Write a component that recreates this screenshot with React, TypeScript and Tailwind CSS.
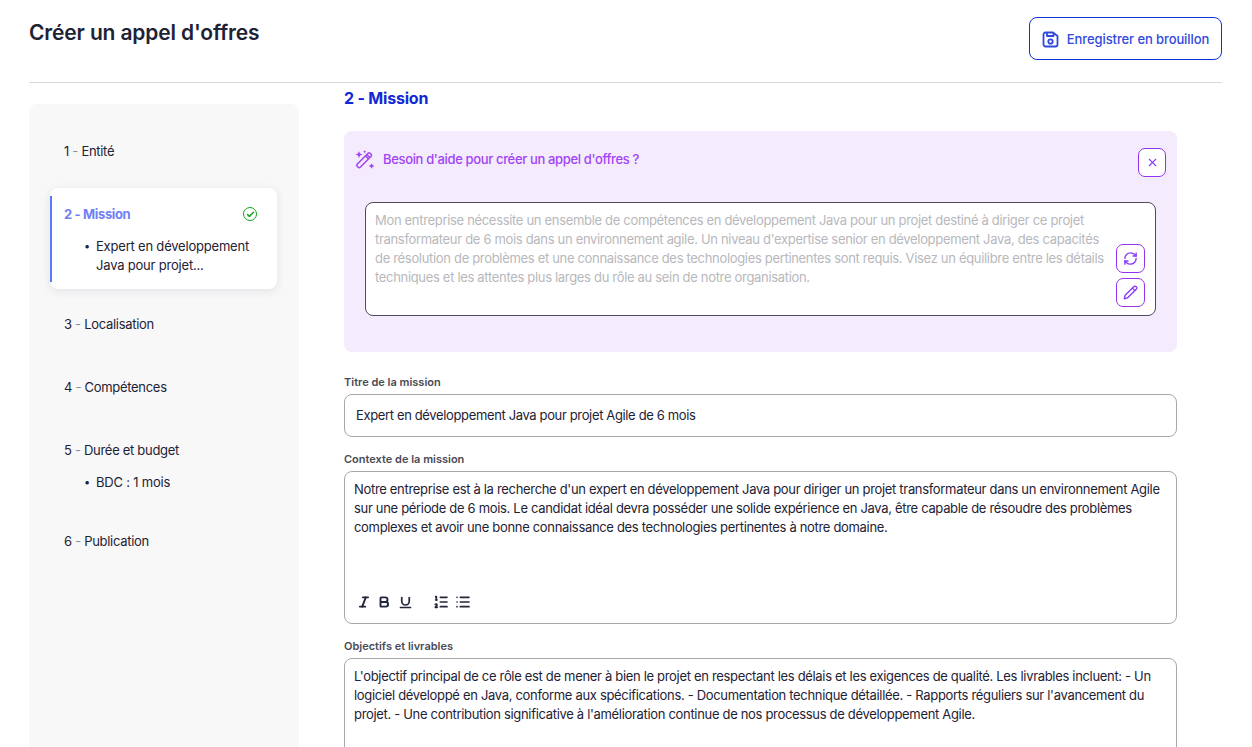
import React from "react";
import { Check, X, RefreshCw, Pencil, Italic, Bold, Underline, ListOrdered, List } from "lucide-react";

const steps = [
  { n: "3", label: "Localisation" },
  { n: "4", label: "Compétences" },
];

function Step({ n, label }: { n: string; label: string }) {
  return (
    <div className="text-[13px] leading-[18px] text-[#1e2235] tracking-[-0.3px]">
      {n} <span className="text-[#8a8d9a]">-</span> {label}
    </div>
  );
}

function SaveIcon() {
  return (
    <svg width="17" height="17" viewBox="0 0 17 17" fill="none" stroke="#2f49dd" strokeWidth="1.8" strokeLinejoin="round">
      <path d="M3.5 1.5h7.5l4.5 3.5v8.5a2 2 0 0 1-2 2h-10a2 2 0 0 1-2-2v-10a2 2 0 0 1 2-2z" />
      <path d="M5 1.5v3.5h6.5v-3" />
      <circle cx="8.5" cy="10.5" r="2.2" />
    </svg>
  );
}

function WandIcon() {
  return (
    <svg width="20" height="20" viewBox="1.5 1 17.5 17.5" className="mt-[2px] shrink-0" fill="none" stroke="#a044f5" strokeWidth="1.3">
      <rect x="-8" y="-1.9" width="16" height="3.8" rx="1.2" transform="translate(9.5 10) rotate(-45)" />
      <path d="M11.8 4.9l2.7 2.7M10.6 6.1l2.7 2.7" />
      <path d="M5 2l.9 2.1L8 5l-2.1.9L5 8l-.9-2.1L2 5l2.1-.9z" fill="#a044f5" stroke="none" />
      <path d="M16 12.5l.8 1.7 1.7.8-1.7.8-.8 1.7-.8-1.7-1.7-.8 1.7-.8z" fill="#a044f5" stroke="none" />
      <path d="M10 1l.4 1.1 1.1.4-1.1.4-.4 1.1-.4-1.1-1.1-.4 1.1-.4z" fill="#a044f5" stroke="none" />
    </svg>
  );
}

function Sidebar() {
  return (
    <aside className="w-[270px] shrink-0 h-[700px] bg-[#f8f8f9] rounded-lg pt-[38px] pl-[21px] pr-[22px]">
      <div className="pl-[14px]">
        <Step n="1" label="Entité" />
      </div>
      <div className="mt-[28px] h-[101px] bg-white rounded-lg shadow-[0_2px_10px_rgba(30,34,53,0.1)] relative pl-[14px] pr-[20px] pt-[17px]">
        <div className="absolute left-0 top-[8px] bottom-[7px] w-[2px] bg-[#5b7bf5]" />
        <div className="flex items-center justify-between">
          <span className="text-[13px] leading-[18px] font-bold text-[#7280f8] tracking-[-0.35px]">2 - Mission</span>
          <span className="w-[14px] h-[14px] rounded-full border-[1.5px] border-[#16a319] flex items-center justify-center">
            <Check className="w-[9px] h-[9px] text-[#16a319]" strokeWidth={4} />
          </span>
        </div>
        <div className="mt-[14px] flex text-[13px] leading-[19px] text-[#1e2235] tracking-[-0.2px]">
          <span className="w-[32px] pl-[20px] shrink-0 text-[11px]">•</span>
          <span>
            Expert en développement
            <br />
            Java pour projet...
          </span>
        </div>
      </div>
      <div className="pl-[14px] pt-[26px] flex flex-col gap-[45px]">
        {steps.map((s) => (
          <Step key={s.n} n={s.n} label={s.label} />
        ))}
        <div>
          <Step n="5" label="Durée et budget" />
          <div className="mt-[14px] flex text-[13px] leading-[18px] text-[#1e2235] tracking-[-0.2px]">
            <span className="w-[32px] pl-[20px] shrink-0 text-[11px]">•</span>
            <span>BDC : 1 mois</span>
          </div>
        </div>
        <div className="-mt-[4px]">
          <Step n="6" label="Publication" />
        </div>
      </div>
    </aside>
  );
}

function PurpleButton({ children }: { children: React.ReactNode }) {
  return (
    <button className="w-[29px] h-[29px] rounded-[7px] border border-[#9333ea] bg-white flex items-center justify-center text-[#8b3df5]">
      {children}
    </button>
  );
}

export default function App() {
  return (
    <div className="h-screen overflow-hidden bg-white px-[29px] pr-[30px] font-['Inter',sans-serif] text-[#1e2235]">
      <header className="h-[83px] border-b border-[#d9d9d9] flex justify-between items-start">
        <h1 className="mt-[19px] text-[21px] leading-[28px] font-semibold tracking-[-0.15px] text-[#1e2235]">Créer un appel d'offres</h1>
        <button className="mt-[17px] w-[193px] h-[43px] pt-[2px] rounded-lg border border-[#1232d8] flex items-center justify-center gap-[8px] text-[13px] tracking-[-0.1px] font-medium text-[#2f49dd]">
          <SaveIcon />
          Enregistrer en brouillon
        </button>
      </header>
      <div className="flex gap-[45px] pt-[21px]">
        <Sidebar />
        <main className="w-[833px] -mt-[17px]">
          <h2 className="text-[16px] leading-[22px] font-bold text-[#1228d6] tracking-[-0.2px]">2 - Mission</h2>

          <section className="mt-[22px] h-[221px] rounded-lg bg-[#f4ebfd] relative pt-[17px] pl-[11px] pr-[11px]">
            <div className="flex items-start justify-between">
              <div className="flex items-start gap-[8px] text-[13px] leading-[20px] font-medium text-[#a044f5] tracking-[-0.35px]">
                <WandIcon />
                <span className="pt-[1px]">Besoin d'aide pour créer un appel d'offres ?</span>
              </div>
              <button className="w-[28px] h-[29px] rounded-[7px] border border-[#9333ea] bg-white flex items-center justify-center text-[#8b3df5]">
                <X className="w-[13px] h-[13px]" />
              </button>
            </div>
            <div className="absolute left-[21px] right-[21px] top-[71px] h-[114px] rounded-lg border border-[#4f4a5c] bg-white pl-[9px] pr-[42px] pt-[8px] text-[13px] leading-[19px] text-[#b8b8bc] tracking-[-0.32px]">
              Mon entreprise nécessite un ensemble de compétences en développement Java pour un projet destiné à diriger ce projet transformateur de 6 mois dans un environnement agile. Un niveau d'expertise senior en développement Java, des capacités de résolution de problèmes et une connaissance des technologies pertinentes sont requis. Visez un équilibre entre les détails techniques et les attentes plus larges du rôle au sein de notre organisation.
              <div className="absolute right-[10px] bottom-[8px] flex flex-col gap-[5px]">
                <PurpleButton>
                  <RefreshCw className="w-[15px] h-[15px]" strokeWidth={2.25} />
                </PurpleButton>
                <PurpleButton>
                  <Pencil className="w-[15px] h-[15px]" strokeWidth={2.25} />
                </PurpleButton>
              </div>
            </div>
          </section>

          <label className="block mt-[22px] text-[11px] leading-[16px] font-semibold text-[#4a4a55]">Titre de la mission</label>
          <div className="mt-[4px] h-[43px] rounded-lg border border-[#a9a9ad] flex items-center px-[11px] text-[13px] tracking-[-0.36px]">
            Expert en développement Java pour projet Agile de 6 mois
          </div>

          <label className="block mt-[14px] text-[11px] leading-[16px] font-semibold text-[#4a4a55]">Contexte de la mission</label>
          <div className="mt-[4px] h-[153px] rounded-lg border border-[#a9a9ad] relative px-[9px] pt-[8px] text-[13px] leading-[19px] tracking-[-0.32px]">
            Notre entreprise est à la recherche d'un expert en développement Java pour diriger un projet transformateur dans un environnement Agile sur une période de 6 mois. Le candidat idéal devra posséder une solide expérience en Java, être capable de résoudre des problèmes complexes et avoir une bonne connaissance des technologies pertinentes à notre domaine.
            <div className="absolute left-[12px] top-[122px] flex items-center text-[#23263a]">
              <Italic className="w-[14px] h-[14px]" strokeWidth={3.25} />
              <Bold className="w-[14px] h-[14px] ml-[6px]" strokeWidth={3.25} />
              <Underline className="w-[15px] h-[15px] ml-[7px]" strokeWidth={2.75} />
              <ListOrdered className="w-[16px] h-[16px] ml-[20px]" strokeWidth={2.5} />
              <List className="w-[16px] h-[16px] ml-[6px]" strokeWidth={2.5} />
            </div>
          </div>

          <label className="block mt-[14px] text-[11px] leading-[16px] font-semibold text-[#4a4a55]">Objectifs et livrables</label>
          <div className="mt-[4px] h-[153px] rounded-lg border border-[#a9a9ad] px-[9px] pt-[8px] text-[13px] leading-[19px] tracking-[-0.32px]">
            L'objectif principal de ce rôle est de mener à bien le projet en respectant les délais et les exigences de qualité. Les livrables incluent: - Un logiciel développé en Java, conforme aux spécifications. - Documentation technique détaillée. - Rapports réguliers sur l'avancement du projet. - Une contribution significative à l'amélioration continue de nos processus de développement Agile.
          </div>
        </main>
      </div>
    </div>
  );
}
